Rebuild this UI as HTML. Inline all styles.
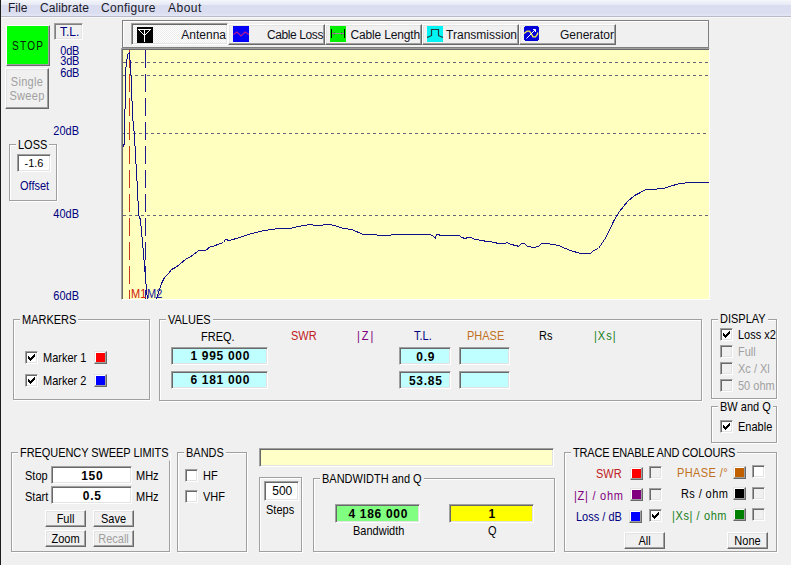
<!DOCTYPE html>
<html><head><meta charset="utf-8">
<style>
html,body{margin:0;padding:0}
body{width:791px;height:565px;background:#f0f0f0;position:relative;overflow:hidden;font-family:"Liberation Sans",sans-serif;font-size:11px;color:#000}
.a{position:absolute}
.t{position:absolute;white-space:nowrap;line-height:13px;transform:scaleY(1.12);transform-origin:0 0}
.grp{position:absolute;border:1px solid #a0a0a0;box-shadow:inset 1px 1px 0 #fff,1px 1px 0 #fff;box-sizing:border-box}
.cap{position:absolute;background:#f0f0f0;padding:0 2px;line-height:13px;white-space:nowrap;transform:scaleY(1.12);transform-origin:0 0}
.sunk{position:absolute;box-sizing:border-box;padding-left:1.5px;border:1px solid;border-color:#a0a0a0 #fff #fff #a0a0a0;box-shadow:inset 1px 1px 0 #696969,inset -1px -1px 0 #e3e3e3;text-align:center;font-weight:bold;line-height:15px}
.btn{position:absolute;box-sizing:border-box;border:1px solid;border-color:#fff #696969 #696969 #fff;box-shadow:inset -1px -1px 0 #a0a0a0,inset 1px 1px 0 #e3e3e3;background:#f0f0f0;text-align:center;line-height:14px}
.cb{position:absolute;width:13px;height:13px;box-sizing:border-box;border:1px solid;border-color:#a0a0a0 #fff #fff #a0a0a0;box-shadow:inset 1px 1px 0 #696969,inset -1px -1px 0 #e3e3e3;background:#fff}
.cb.dis{background:#f0f0f0}
.cb svg{position:absolute;left:2px;top:2px}
.sw{position:absolute;width:13px;height:13px;box-sizing:border-box;border:1px solid;border-color:#e3e3e3 #696969 #696969 #e3e3e3;box-shadow:inset -1px -1px 0 #a0a0a0,inset 1px 1px 0 #fff}
.bt{display:inline-block;transform:scaleY(1.12);transform-origin:0 0}
.navy{color:#000080}
.dis{color:#a0a0a0}
</style></head>
<body>
<!-- window left border -->
<div class="a" style="left:0;top:0;width:1px;height:565px;background:#1c1c1c"></div>
<!-- menu bar -->
<div class="a" style="left:1px;top:0;width:790px;height:16px;background:linear-gradient(#f6f8fc 0,#eef0f8 2px,#e8ebf6 4.5px,#d9ddef 5.5px,#dadef0 13px,#e4e7f5 16px)"></div>
<div class="a" style="left:1px;top:16px;width:790px;height:1px;background:#b8bac6"></div><div class="a" style="left:1px;top:17px;width:790px;height:1px;background:#f8f8f8"></div>
<div class="t" style="left:8px;top:1px;font-size:12px;line-height:15px;color:#1a1a2a;transform:none">File</div>
<div class="t" style="left:40px;top:1px;font-size:12px;line-height:15px;color:#1a1a2a;transform:none;letter-spacing:0.1px">Calibrate</div>
<div class="t" style="left:101px;top:1px;font-size:12px;line-height:15px;color:#1a1a2a;transform:none;letter-spacing:0.3px">Configure</div>
<div class="t" style="left:168px;top:1px;font-size:12px;line-height:15px;color:#1a1a2a;transform:none;letter-spacing:0.5px">About</div>

<!-- STOP button -->
<div class="a" style="left:6px;top:25px;width:44px;height:41px;box-sizing:border-box;border:1px solid;border-color:#fff #696969 #696969 #fff;box-shadow:inset -1px -1px 0 #a0a0a0;background:#00ff00"></div>
<div class="t" style="left:12px;top:39px;font-size:12px;letter-spacing:1.5px;color:#0a200a;transform:scale(0.84,1.1);transform-origin:0 0">STOP</div>
<!-- Single sweep -->
<div class="btn" style="left:5px;top:68px;width:44px;height:41px"></div>
<div class="t dis" style="left:5px;top:75px;width:44px;text-align:center;font-size:11px;line-height:12px;letter-spacing:0.3px">Single<br>Sweep</div>
<!-- T.L. box -->
<div class="a" style="left:54px;top:23px;width:29px;height:17px;box-sizing:border-box;border:1px solid;border-color:#a0a0a0 #fff #fff #a0a0a0;box-shadow:inset 1px 1px 0 #808080,inset -1px -1px 0 #e3e3e3"></div>
<div class="t navy" style="left:60px;top:25px;font-size:12px;transform:scale(1,1.05)">T.L.</div>
<!-- dB labels -->
<div class="t navy" style="left:40px;top:44px;width:39px;text-align:right;font-size:11px;letter-spacing:-0.3px">0dB</div>
<div class="t navy" style="left:40px;top:54px;width:39px;text-align:right;font-size:11px;letter-spacing:-0.3px">3dB</div>
<div class="t navy" style="left:40px;top:66px;width:39px;text-align:right;font-size:11px;letter-spacing:-0.3px">6dB</div>
<div class="t navy" style="left:40px;top:124px;width:39px;text-align:right">20dB</div>
<div class="t navy" style="left:40px;top:207px;width:39px;text-align:right">40dB</div>
<div class="t navy" style="left:40px;top:289px;width:39px;text-align:right">60dB</div>

<!-- LOSS group -->
<div class="grp" style="left:9px;top:144px;width:48px;height:57px"></div>
<div class="cap" style="left:16px;top:138px">LOSS</div>
<div class="a" style="left:17px;top:154px;width:34px;height:18px;box-sizing:border-box;border:1px solid;border-color:#a0a0a0 #fff #fff #a0a0a0;box-shadow:inset 1px 1px 0 #696969,inset -1px -1px 0 #e3e3e3;background:#fff;text-align:center;line-height:16px">-1.6</div>
<div class="t navy" style="left:20px;top:179px">Offset</div>

<!-- toolbar -->
<div class="a" id="tb" style="left:122px;top:20px;width:587px;height:28px;box-sizing:border-box;border:1px solid #808080;box-shadow:inset 1px 1px 0 #fff"></div>
<!-- chart frame -->
<div class="a" style="left:121px;top:48px;width:589px;height:252px;box-sizing:border-box;border:1px solid;border-color:#a0a0a0 #fff #fff #a0a0a0;box-shadow:inset 1px 1px 0 #696969;background:#ffffc0"></div>


<!-- toolbar buttons -->
<div class="a" style="left:131px;top:23px;width:97px;height:22px;box-sizing:border-box;border:1px solid;border-color:#a0a0a0 #fff #fff #a0a0a0;box-shadow:inset 1px 1px 0 #696969,inset -1px -1px 0 #e3e3e3;background-color:#f8f8f8;background-image:repeating-conic-gradient(#fff 0 25%,#ececec 0 50%);background-size:2px 2px"></div>
<div class="btn" style="left:228px;top:24px;width:97px;height:21px"></div>
<div class="btn" style="left:325px;top:24px;width:97px;height:21px"></div>
<div class="btn" style="left:422px;top:24px;width:97px;height:21px"></div>
<div class="btn" style="left:519px;top:24px;width:97px;height:21px"></div>
<svg class="a" style="left:137px;top:27px" width="16" height="16" shape-rendering="crispEdges"><rect width="16" height="16" fill="#000"/><path d="M1,2.5H14M7.5,2V15" stroke="#fff" fill="none"/><path d="M2,3h1v1h-1zM3,4h1v1h-1zM4,5h1v1h-1zM5,6h1v1h-1zM6,7h1v1h-1zM12,3h1v1h-1zM11,4h1v1h-1zM10,5h1v1h-1zM9,6h1v1h-1zM8,7h1v1h-1z" fill="#fff"/></svg>
<svg class="a" style="left:233px;top:26px" width="16" height="16"><rect width="16" height="16" fill="#0000f8"/><path d="M0.5,8.5L4,6L8,10L12,6L16,8.5" stroke="#b81890" stroke-width="1.2" fill="none"/></svg>
<svg class="a" style="left:330px;top:26px" width="16" height="16" shape-rendering="crispEdges"><rect width="16" height="16" fill="#00f000"/><path d="M1.5,3V12M14.5,3V12" stroke="#000" fill="none"/><path d="M2,7.5H14" stroke="#909090" fill="none"/><rect x="3" y="7" width="1" height="1" fill="#a040a0"/><rect x="12" y="7" width="1" height="1" fill="#a040a0"/><rect x="4" y="6" width="1" height="1" fill="#208020"/><rect x="4" y="8" width="1" height="1" fill="#208020"/><rect x="11" y="6" width="1" height="1" fill="#208020"/><rect x="11" y="8" width="1" height="1" fill="#208020"/></svg>
<svg class="a" style="left:427px;top:26px" width="16" height="16"><rect width="16" height="16" fill="#00f4f4"/><path d="M0,11.5L2.5,10.5L4.5,9.5V3.5H11.5V9.5L13.5,10.5L16,11.5" stroke="#203838" stroke-width="1.2" fill="none"/></svg>
<svg class="a" style="left:524px;top:26px" width="15" height="15"><path d="M1,0H14V1H15V14H14V15H1V14H0V1H1Z" fill="#0000d8"/><path d="M0,7.5L3,5.2H5.5L7.8,8.6L9,10.8H11.5L13.6,8V6.5" stroke="#f4f450" stroke-width="1.3" fill="none"/><path d="M2.5,12.5L11.2,3.8M9,3.5H11.5V6" stroke="#fff" stroke-width="1" fill="none"/></svg>
<div class="t" style="left:150px;top:27px;width:76px;text-align:right;font-size:12px;line-height:16px;color:#101018;transform:none">Antenna</div>
<div class="t" style="left:240px;top:27px;width:83px;text-align:right;font-size:12px;line-height:16px;color:#101018;transform:none;letter-spacing:-0.4px">Cable Loss</div>
<div class="t" style="left:340px;top:27px;width:80px;text-align:right;font-size:12px;line-height:16px;color:#101018;transform:none;letter-spacing:-0.15px">Cable Length</div>
<div class="t" style="left:440px;top:27px;width:77px;text-align:right;font-size:12px;line-height:16px;color:#101018;transform:none">Transmission</div>
<div class="t" style="left:540px;top:27px;width:74px;text-align:right;font-size:12px;line-height:16px;color:#101018;transform:none">Generator</div>
<!-- chart content -->
<svg class="a" style="left:123px;top:50px" width="586" height="249" viewBox="123 50 586 249">
<g stroke="#66647a" stroke-width="1" stroke-dasharray="3 3" shape-rendering="crispEdges">
<path d="M123,62.5H709M123,75.5H709M121,133.5H709M123,215.5H709"/>
</g>
<path d="M129.5,50V299" stroke="#c83a1a" stroke-dasharray="18 6" shape-rendering="crispEdges"/>
<path d="M145.5,50V299" stroke="#1c1c90" stroke-dasharray="18 6" shape-rendering="crispEdges"/>
<polyline points="123.5,146.5 123.5,144.5 124.5,144.5 124.5,109.5 125.5,108.5 125.5,67.5 126.5,66.5 126.5,59.5 127.5,58.5 127.5,54.5 128.5,53.5 129.5,52.5 129.5,59.5 130.5,60.5 130.5,74.5 131.5,75.5 131.5,100.5 132.5,101.5 132.5,120.5 133.5,121.5 133.5,130.5 134.5,131.5 134.5,145.5 135.5,146.5 135.5,163.5 136.5,164.5 136.5,180.5 137.5,181.5 137.5,200.5 138.5,201.5 138.5,215.5 139.5,216.5 140.5,220.5 141.5,231 142.5,242 143.5,253 144.5,266 145.5,278 146.5,290 147.5,299.5 148,312 156,312 156.5,298.5 157.5,295.5 159.5,289.5 161.5,283.5 164.5,277.5 168.5,273.5 171.5,269.5 175.5,267.5 179.5,264.5 185.5,259.5 192.5,255.5 198.5,250.5 205.5,250.5 210.5,246.5 212.5,246.5 223.5,242.5 225.5,239.5 229.5,240.5 239.5,237.5 248.5,234.5 259.5,231.5 271.5,229.5 278.5,228.5 286.5,228.5 289.5,228.5 298.5,226.5 310.5,224.5 315.5,225.5 330.5,224.5 337.5,226.5 343.5,228.5 351.5,229.5 363.5,234.5 371.5,234.5 381.5,235.5 400.5,234.5 401.5,234.5 412.5,234.5 415.5,234.5 428.5,234.5 430.5,234.5 433.5,236.5 435.5,238.5 436.5,234.5 442.5,235.5 459.5,235.5 461.5,237.5 465.5,238.5 467.5,237.5 471.5,237.5 474.5,239.5 483.5,240.5 485.5,241.5 489.5,241.5 494.5,242.5 498.5,243.5 504.5,243.5 507.5,242.5 510.5,244.5 516.5,245.5 518.5,246.5 521.5,243.5 524.5,243.5 527.5,246.5 533.5,247.5 538.5,246.5 541.5,243.5 547.5,243.5 558.5,245.5 565.5,248.5 570.5,250.5 580.5,253.5 590.5,253.5 593.5,250.5 598.5,248.5 606.5,236.5 613.5,221.5 619.5,211.5 627.5,201.5 634.5,195.5 640.5,192.5 645.5,189.5 653.5,189.5 661.5,188.5 663.5,188.5 669.5,186.5 679.5,183.5 691.5,182.5 708.5,182.5" fill="none" stroke="#10108a" stroke-width="1" shape-rendering="crispEdges"/>
</svg>
<div class="t" style="left:131px;top:287px;font-size:11px;color:#d02010">M1</div>
<div class="t" style="left:147px;top:287px;font-size:11px;color:#1818a0">M2</div>

<!-- MARKERS -->
<div class="grp" style="left:13px;top:319px;width:137px;height:81px"></div>
<div class="cap" style="left:20px;top:313px">MARKERS</div>

<!-- VALUES -->
<div class="grp" style="left:159px;top:319px;width:543px;height:82px"></div>
<div class="cap" style="left:166px;top:313px">VALUES</div>

<!-- DISPLAY -->
<div class="grp" style="left:711px;top:319px;width:66px;height:80px"></div>
<div class="cap" style="left:718px;top:312px">DISPLAY</div>

<!-- BW and Q -->
<div class="grp" style="left:711px;top:406px;width:66px;height:37px"></div>
<div class="cap" style="left:718px;top:400px">BW and Q</div>

<!-- FREQUENCY SWEEP LIMITS -->
<div class="grp" style="left:11px;top:452px;width:159px;height:100px"></div>
<div class="cap" style="left:18px;top:446px;letter-spacing:-0.07px">FREQUENCY SWEEP LIMITS</div>

<!-- BANDS -->
<div class="grp" style="left:177px;top:452px;width:70px;height:100px"></div>
<div class="cap" style="left:184px;top:446px">BANDS</div>

<!-- yellow status bar -->
<div class="a" style="left:259px;top:448px;width:295px;height:19px;box-sizing:border-box;border:1px solid;border-color:#a0a0a0 #fff #fff #a0a0a0;box-shadow:inset 1px 1px 0 #696969,inset -1px -1px 0 #e3e3e3;background:#ffffc8"></div>

<!-- Steps -->
<div class="grp" style="left:259px;top:477px;width:43px;height:75px"></div>

<!-- BANDWIDTH and Q -->
<div class="grp" style="left:313px;top:478px;width:242px;height:74px"></div>
<div class="cap" style="left:320px;top:472px">BANDWIDTH and Q</div>

<!-- TRACE -->
<div class="grp" style="left:564px;top:452px;width:213px;height:100px"></div>
<div class="cap" style="left:571px;top:446px;letter-spacing:-0.2px">TRACE ENABLE AND COLOURS</div>

<div class="cb" style="left:25px;top:351px"><svg width="7" height="7"><path d="M6,0h1v1h-1zM5,1h2v1h-2zM0,2h1v1h-1zM4,2h3v1h-3zM0,3h2v1h-2zM3,3h3v1h-3zM0,4h5v1h-5zM1,5h3v1h-3zM2,6h1v1h-1z" fill="#000"/></svg></div>
<div class="cb" style="left:25px;top:374px"><svg width="7" height="7"><path d="M6,0h1v1h-1zM5,1h2v1h-2zM0,2h1v1h-1zM4,2h3v1h-3zM0,3h2v1h-2zM3,3h3v1h-3zM0,4h5v1h-5zM1,5h3v1h-3zM2,6h1v1h-1z" fill="#000"/></svg></div>
<div class="t" style="left:43px;top:351px;">Marker 1</div>
<div class="t" style="left:43px;top:374px;">Marker 2</div>
<div class="sw" style="left:94px;top:351px;background:#ff0000"></div>
<div class="sw" style="left:94px;top:374px;background:#0000ff"></div>
<div class="t" style="left:201px;top:330px;">FREQ.</div>
<div class="t" style="left:291px;top:329px;color:#c02020">SWR</div>
<div class="t" style="left:357px;top:329px;color:#800080;letter-spacing:2px">|Z|</div>
<div class="t" style="left:414px;top:329px;color:#000080">T.L.</div>
<div class="t" style="left:467px;top:329px;color:#c07020">PHASE</div>
<div class="t" style="left:539px;top:329px;">Rs</div>
<div class="t" style="left:594px;top:329px;color:#208020;letter-spacing:1px">|Xs|</div>
<div class="sunk" style="left:171px;top:347px;width:97px;height:18px;line-height:17px;background:#c0ffff;font-size:12px;letter-spacing:0.7px">1 995 000</div>
<div class="sunk" style="left:171px;top:371px;width:97px;height:18px;line-height:17px;background:#c0ffff;font-size:12px;letter-spacing:0.7px">6 181 000</div>
<div class="sunk" style="left:399px;top:347px;width:52px;height:18px;line-height:19px;background:#c0ffff;font-size:12px;letter-spacing:0.7px">0.9</div>
<div class="sunk" style="left:399px;top:371px;width:52px;height:18px;line-height:19px;background:#c0ffff;font-size:12px;letter-spacing:0.7px">53.85</div>
<div class="sunk" style="left:459px;top:347px;width:51px;height:18px;background:#c0ffff;"></div>
<div class="sunk" style="left:459px;top:371px;width:51px;height:18px;background:#c0ffff;"></div>
<div class="cb" style="left:720px;top:328px"><svg width="7" height="7"><path d="M6,0h1v1h-1zM5,1h2v1h-2zM0,2h1v1h-1zM4,2h3v1h-3zM0,3h2v1h-2zM3,3h3v1h-3zM0,4h5v1h-5zM1,5h3v1h-3zM2,6h1v1h-1z" fill="#000"/></svg></div>
<div class="t" style="left:738px;top:328px;">Loss x2</div>
<div class="cb dis" style="left:720px;top:345px"></div>
<div class="t" style="left:738px;top:345px;color:#a0a0a0">Full</div>
<div class="cb dis" style="left:720px;top:362px"></div>
<div class="t" style="left:738px;top:362px;color:#a0a0a0">Xc / Xl</div>
<div class="cb dis" style="left:720px;top:379px"></div>
<div class="t" style="left:738px;top:379px;color:#a0a0a0">50 ohm</div>
<div class="cb" style="left:720px;top:420px"><svg width="7" height="7"><path d="M6,0h1v1h-1zM5,1h2v1h-2zM0,2h1v1h-1zM4,2h3v1h-3zM0,3h2v1h-2zM3,3h3v1h-3zM0,4h5v1h-5zM1,5h3v1h-3zM2,6h1v1h-1z" fill="#000"/></svg></div>
<div class="t" style="left:738px;top:420px;">Enable</div>
<div class="t" style="left:25px;top:469px;">Stop</div>
<div class="t" style="left:25px;top:490px;">Start</div>
<div class="sunk" style="left:51px;top:466px;width:81px;height:18px;line-height:19px;background:#fff;font-size:12px;letter-spacing:0.7px">150</div>
<div class="sunk" style="left:51px;top:486px;width:81px;height:18px;line-height:19px;background:#fff;font-size:12px;letter-spacing:0.7px">0.5</div>
<div class="t" style="left:136px;top:469px;">MHz</div>
<div class="t" style="left:136px;top:490px;">MHz</div>
<div class="btn" style="left:45px;top:510px;width:41px;height:17px;"><span class="bt">Full</span></div>
<div class="btn" style="left:93px;top:510px;width:41px;height:17px;"><span class="bt">Save</span></div>
<div class="btn" style="left:45px;top:530px;width:41px;height:17px;"><span class="bt">Zoom</span></div>
<div class="btn" style="left:93px;top:530px;width:41px;height:17px;color:#a0a0a0"><span class="bt">Recall</span></div>
<div class="cb" style="left:185px;top:469px"></div>
<div class="t" style="left:203px;top:469px;">HF</div>
<div class="cb" style="left:185px;top:490px"></div>
<div class="t" style="left:203px;top:490px;">VHF</div>
<div class="sunk" style="left:264px;top:481px;width:35px;height:20px;background:#fff;font-weight:normal;font-size:12px;line-height:18px">500</div>
<div class="t" style="left:266px;top:503px;">Steps</div>
<div class="sunk" style="left:335px;top:504px;width:85px;height:19px;line-height:18px;background:#80ff80;font-size:12px;letter-spacing:0.7px">4 186 000</div>
<div class="t" style="left:353px;top:524px;">Bandwidth</div>
<div class="sunk" style="left:449px;top:504px;width:85px;height:19px;line-height:18px;background:#ffff00;font-size:12px;letter-spacing:0.7px">1</div>
<div class="t" style="left:488px;top:524px;">Q</div>
<div class="t" style="left:596px;top:467px;color:#c02020">SWR</div>
<div class="sw" style="left:630px;top:467px;background:#ff0000"></div>
<div class="cb dis" style="left:649px;top:466px"></div>
<div class="t" style="left:574px;top:489px;color:#800080;letter-spacing:0.75px">|Z| / ohm</div>
<div class="sw" style="left:630px;top:488px;background:#800080"></div>
<div class="cb dis" style="left:649px;top:488px"></div>
<div class="t" style="left:576px;top:510px;color:#000080">Loss / dB</div>
<div class="sw" style="left:629px;top:510px;background:#0000ff"></div>
<div class="cb" style="left:649px;top:509px"><svg width="7" height="7"><path d="M6,0h1v1h-1zM5,1h2v1h-2zM0,2h1v1h-1zM4,2h3v1h-3zM0,3h2v1h-2zM3,3h3v1h-3zM0,4h5v1h-5zM1,5h3v1h-3zM2,6h1v1h-1z" fill="#000"/></svg></div>
<div class="t" style="left:677px;top:466px;color:#c07020;letter-spacing:0.4px">PHASE /°</div>
<div class="sw" style="left:733px;top:466px;background:#c06000"></div>
<div class="cb" style="left:752px;top:465px"></div>
<div class="t" style="left:681px;top:487px;letter-spacing:0.4px">Rs / ohm</div>
<div class="sw" style="left:733px;top:487px;background:#000000"></div>
<div class="cb dis" style="left:752px;top:487px"></div>
<div class="t" style="left:672px;top:509px;color:#208020;letter-spacing:0.6px">|Xs| / ohm</div>
<div class="sw" style="left:733px;top:508px;background:#008000"></div>
<div class="cb dis" style="left:752px;top:508px"></div>
<div class="btn" style="left:624px;top:532px;width:41px;height:17px;"><span class="bt">All</span></div>
<div class="btn" style="left:727px;top:532px;width:41px;height:17px;"><span class="bt">None</span></div>
</body></html>
